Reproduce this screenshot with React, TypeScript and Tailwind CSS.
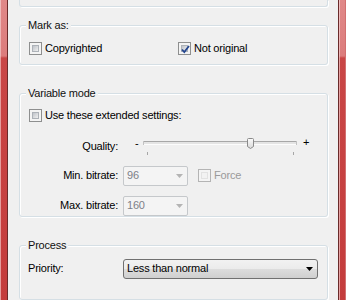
import React from 'react';

const Checkbox: React.FC<{ checked?: boolean; disabled?: boolean }> = ({ checked = false, disabled = false }) => (
    <div
        className={`flex h-[13px] w-[13px] shrink-0 items-center justify-center border p-[2px] ${disabled ? 'border-[#b4b4b4] bg-[#f4f4f4]' : 'border-[#8e8f8f] bg-[#f4f4f4]'}`}
    >
        <div
            className={`relative h-full w-full border ${disabled ? 'border-[#e2e2e2] bg-[#f2f2f2]' : 'border-[#adb2b8] bg-gradient-to-br from-[#bfc3c9] to-[#f0f0f0]'}`}
        >
            {checked && (
                <svg width="11" height="11" viewBox="0 0 11 11" className="absolute -left-[2px] -top-[2px]">
                    <path d="M2 5.5 L4.3 8 L9 2" fill="none" stroke="#24468f" strokeWidth="1.8" />
                </svg>
            )}
        </div>
    </div>
);

const Group: React.FC<{ title: string; className?: string; children?: React.ReactNode }> = ({ title, className = '', children }) => (
    <div className={`rounded-[3px] border border-[#d5dfe5] shadow-[inset_1px_1px_0_#fff,1px_1px_0_#fff] ${className}`}>
        <div className="-mt-[7px] ml-[6px] w-fit bg-[#f0f0f0] px-[2px] leading-[13px] text-[#111]">{title}</div>
        {children}
    </div>
);

const DisabledCombo: React.FC<{ value: string }> = ({ value }) => (
    <div className="flex h-[20px] w-[65px] items-center justify-between rounded-[2px] border border-[#c5c8cb] bg-[#f4f4f4] pl-[3px] pr-[4px]">
        <span className="leading-[13px] text-[#7d8088]">{value}</span>
        <svg width="7" height="4" viewBox="0 0 7 4">
            <path d="M0 0 H7 L3.5 4 Z" fill="#b4b4b4" />
        </svg>
    </div>
);

const Slider: React.FC = () => (
    <div className="ml-[5px] flex h-[22px]">
        <div className="w-[20px] pl-[12px] pt-[2px] leading-[13px]">-</div>
        <svg width="154" height="22" viewBox="0 0 154 22">
            <defs>
                <linearGradient id="thumb" x1="0" y1="0" x2="0" y2="1">
                    <stop offset="0" stopColor="#fbfbfb" />
                    <stop offset="1" stopColor="#d9d9d9" />
                </linearGradient>
            </defs>
            <rect x="0" y="6" width="154" height="1" fill="#a7a7a7" />
            <rect x="0" y="7" width="154" height="2" fill="#e4e4e4" />
            <rect x="0" y="9" width="154" height="1" fill="#fcfcfc" />
            <rect x="0" y="6" width="1" height="4" fill="#c2c2c2" />
            <rect x="153" y="6" width="1" height="4" fill="#c2c2c2" />
            <path d="M104.5 4.5 Q104.5 3.5 105.5 3.5 H109.5 Q110.5 3.5 110.5 4.5 V11.5 L107.5 13.5 L104.5 11.5 Z" fill="url(#thumb)" stroke="#8a8a8a" />
            <rect x="4" y="17" width="1" height="3" fill="#a6a6a6" />
            <rect x="150" y="17" width="1" height="3" fill="#a6a6a6" />
        </svg>
        <div className="pl-[6px] pt-[1px] leading-[13px]">+</div>
    </div>
);

const App: React.FC = () => {
    return (
        <div className="flex h-[300px] w-[346px] overflow-hidden font-['Liberation_Sans',Arial,sans-serif] text-[11px] tracking-[-0.2px] text-black">
            {/* left frame */}
            <div className="flex w-[8px] shrink-0">
                <div className="w-[1px] bg-[linear-gradient(to_bottom,#eebcbc_0,#ebb2b2_56px,#e49c9c_58px,#e49c9c_100%)]" />
                <div className="w-[6px] bg-[linear-gradient(to_bottom,#e08888_0,#dc7c7c_56px,#c94646_58px,#c43c3c_100%)]" />
                <div className="w-[1px] bg-[#6a2a2a]" />
            </div>

            <div className="flex w-[330px] flex-col bg-[#f0f0f0] pl-[11px] pr-[10px]">
                {/* previous group, cut off */}
                <div className="h-[8px] rounded-b-[3px] border-x border-b border-[#d5dfe5] shadow-[1px_1px_0_#fff]" />

                <Group title="Mark as:" className="mt-[18px] h-[43px]">
                    <div className="mt-[10px] flex pl-[9px]">
                        <div className="flex w-[149px] items-center gap-[3px]">
                            <Checkbox />
                            <span className="leading-[13px]">Copyrighted</span>
                        </div>
                        <div className="flex items-center gap-[3px]">
                            <Checkbox checked />
                            <span className="leading-[13px]">Not original</span>
                        </div>
                    </div>
                </Group>

                <Group title="Variable mode" className="mt-[28px] h-[132px]">
                    <div className="mt-[9px] flex items-center gap-[3px] pl-[9px]">
                        <Checkbox />
                        <span className="leading-[13px]">Use these extended settings:</span>
                    </div>

                    <div className="mt-[13px] flex h-[22px] items-start">
                        <div className="mt-[5px] w-[98px] text-right leading-[13px]">Quality:</div>
                        <Slider />
                    </div>

                    <div className="mt-[9px] flex h-[20px] items-center">
                        <div className="w-[98px] text-right leading-[13px]">Min. bitrate:</div>
                        <div className="ml-[5px]">
                            <DisabledCombo value="96" />
                        </div>
                        <div className="ml-[10px] flex items-center gap-[3px]">
                            <Checkbox disabled />
                            <span className="leading-[13px] text-[#9a9a9a]">Force</span>
                        </div>
                    </div>

                    <div className="mt-[10px] flex h-[20px] items-center">
                        <div className="w-[98px] text-right leading-[13px]">Max. bitrate:</div>
                        <div className="ml-[5px]">
                            <DisabledCombo value="160" />
                        </div>
                    </div>
                </Group>

                <Group title="Process" className="mt-[28px] h-[60px]">
                    <div className="mt-[7px] flex h-[20px] items-center pl-[8px]">
                        <div className="w-[95px] leading-[13px]">Priority:</div>
                        <div className="flex h-[20px] w-[195px] items-center justify-between rounded-[3px] border border-[#707070] bg-[linear-gradient(to_bottom,#f2f2f2_0%,#ebebeb_50%,#dddddd_50%,#cfcfcf_100%)] pl-[3px] pr-[4px]">
                            <span className="leading-[13px]">Less than normal</span>
                            <svg width="7" height="4" viewBox="0 0 7 4">
                                <path d="M0 0 H7 L3.5 4 Z" fill="#000" />
                            </svg>
                        </div>
                    </div>
                </Group>
            </div>

            {/* right frame */}
            <div className="flex w-[8px] shrink-0">
                <div className="w-[1px] bg-[#6a2a2a]" />
                <div className="w-[1px] bg-[linear-gradient(to_bottom,#efc0c0_0,#ebb4b4_56px,#e6a2a2_58px,#e6a2a2_100%)]" />
                <div className="w-[5px] bg-[linear-gradient(to_bottom,#e08888_0,#dc7c7c_56px,#c94646_58px,#c43c3c_100%)]" />
                <div className="w-[1px] bg-[#d27070]" />
            </div>
        </div>
    );
};

export default App;
